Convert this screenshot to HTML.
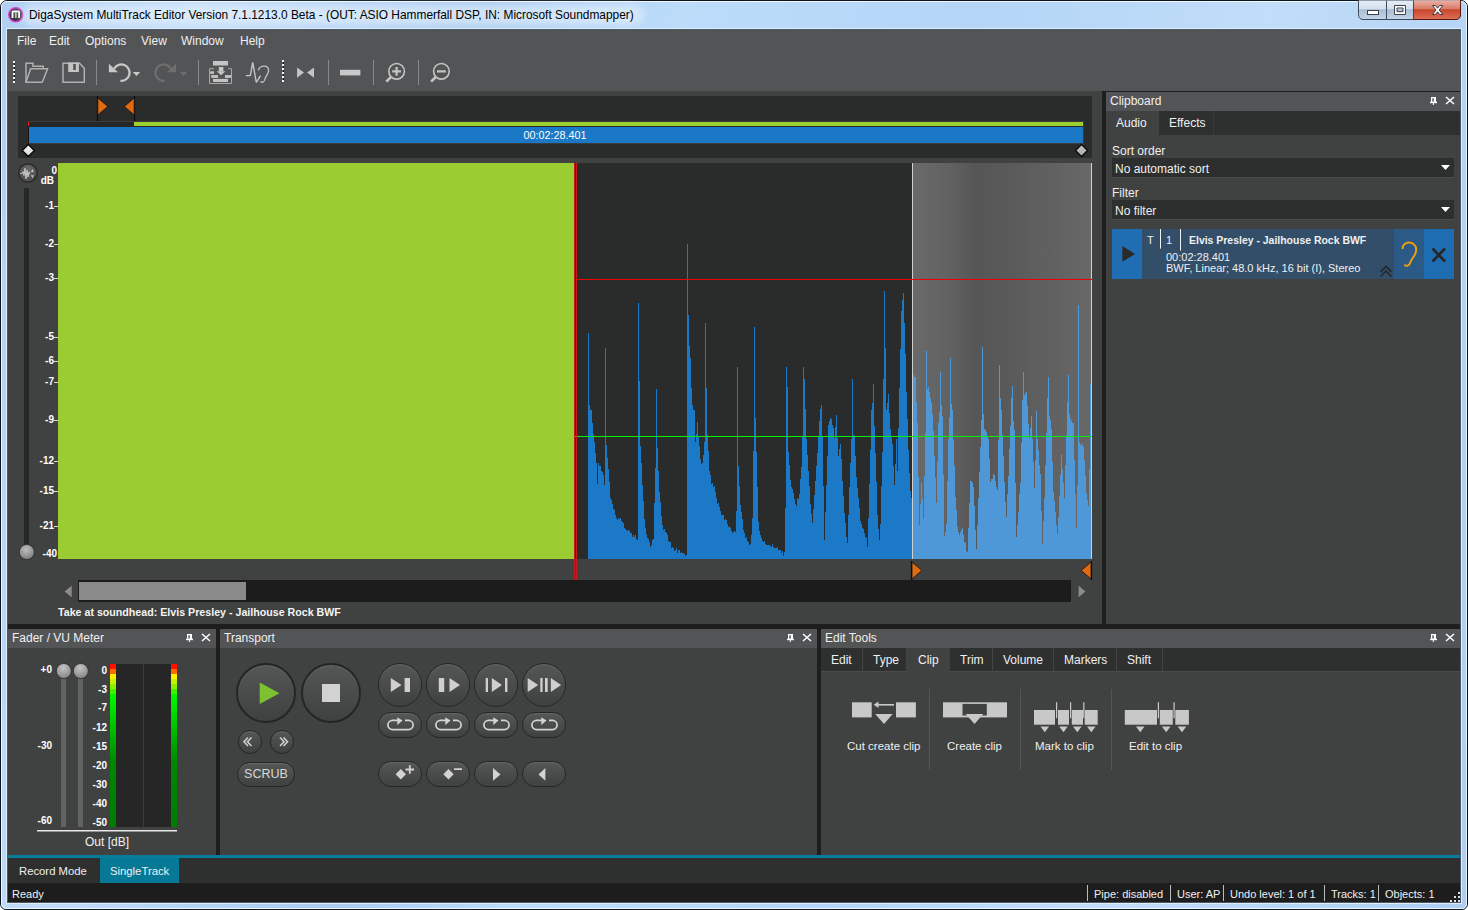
<!DOCTYPE html>
<html><head><meta charset="utf-8">
<style>
*{box-sizing:border-box;margin:0;padding:0}
html,body{width:1468px;height:910px;overflow:hidden}
body{position:relative;background:#fff;font-family:"Liberation Sans",sans-serif;font-size:12px;color:#f0f0f0}
.a{position:absolute}
.t{position:absolute;white-space:nowrap;line-height:14px}
/* frame */
#frame{left:0;top:0;width:1468px;height:910px;border:1px solid #0c141e;border-radius:7px 7px 6px 6px;
 background:linear-gradient(100deg,#b0cff2 0%,#c0dcf8 12%,#aacbf0 30%,#bcdcfa 42%,#b4d5f7 60%,#c0ddf9 78%,#aecdf1 100%)}
#frame2{left:1px;top:1px;width:1466px;height:908px;border:1px solid rgba(245,250,255,.9);border-radius:6px 6px 5px 5px}
#app{left:7px;top:29px;width:1454px;height:874px;background:#404141}
.bar{background:#535455}
.dk{background:#2a2b2b}
.sep{background:#1e1e1e}
.tabdk{background:#2e2f2f}
.menu span{position:absolute;top:34px;line-height:14px}
.btn{position:absolute;border-radius:50%;border:1.5px solid #242525;background:linear-gradient(#555656,#3f4040);box-shadow:0 1px 1px rgba(255,255,255,.10) inset}
.pill{position:absolute;border-radius:14px;border:1.5px solid #242525;background:linear-gradient(#555656,#3f4040);box-shadow:0 1px 1px rgba(255,255,255,.10) inset}
.ic{fill:#c8c8c8}
</style></head><body>
<div id="frame" class="a"></div>
<div id="frame2" class="a"></div>
<!-- title icon -->
<svg class="a" style="left:0;top:0" width="32" height="30" viewBox="0 0 32 30">
 <defs><radialGradient id="appg" cx=".5" cy=".35" r=".6"><stop offset="0" stop-color="#5a5a5a"/><stop offset="1" stop-color="#2e2e2e"/></radialGradient></defs>
 <circle cx="15.8" cy="14.85" r="7" fill="url(#appg)" stroke="#d23cd2" stroke-width="1.5"/>
 <path d="M12.5 18V12.2Q12.5 11.4 13.3 11.4H18.3Q19.1 11.4 19.1 12.2V18" fill="none" stroke="#fff" stroke-width="1.8"/>
 <path d="M15.8 12V18" stroke="#b8b8b8" stroke-width="1.8"/>
</svg>
<div class="a" style="left:22px;top:5px;width:622px;height:20px;background:rgba(240,247,255,.55);filter:blur(4px);border-radius:10px"></div>
<div class="t" style="left:29px;top:8px;color:#000;font-size:11.9px;line-height:15px">DigaSystem MultiTrack Editor Version 7.1.1213.0 Beta - (OUT: ASIO Hammerfall DSP, IN: Microsoft Soundmapper)</div>
<!-- window buttons -->
<svg class="a" style="left:1356px;top:0" width="108" height="22" viewBox="1356 0 108 22">
 <defs>
  <linearGradient id="wb" x1="0" y1="0" x2="0" y2="1"><stop offset="0" stop-color="#e6eef8"/><stop offset=".45" stop-color="#d3e0ee"/><stop offset=".5" stop-color="#a9bdd4"/><stop offset="1" stop-color="#c3d5e8"/></linearGradient>
  <linearGradient id="wc" x1="0" y1="0" x2="0" y2="1"><stop offset="0" stop-color="#eab0a4"/><stop offset=".45" stop-color="#d97a66"/><stop offset=".5" stop-color="#c8452c"/><stop offset="1" stop-color="#dd6f55"/></linearGradient>
 </defs>
 <path d="M1358.5 0V14.5A4.5 4.5 0 0 0 1363 19.5H1456A4.5 4.5 0 0 0 1460.5 15V0Z" fill="url(#wb)" stroke="#3e4a58" stroke-width="1"/>
 <path d="M1413.5 0.5H1460V15A4 4 0 0 1 1456 19H1413.5Z" fill="url(#wc)"/>
 <path d="M1460.5 0V15A4.5 4.5 0 0 1 1456 19.5H1413" fill="none" stroke="#5a1a10" stroke-width="1"/>
 <path d="M1386.5 0.5V19.5M1413.5 0.5V19.5" stroke="#3e4a58" stroke-width="1"/>
 <rect x="1367.5" y="10.5" width="11" height="4" fill="#fff" stroke="#3b3f48" stroke-width="1"/>
 <path d="M1394.5 5.5H1405.5V14.5H1394.5Z M1397 8H1403V11.7H1397Z" fill="#fff" fill-rule="evenodd" stroke="#3b3f48" stroke-width="1"/>
 <path d="M1432.5 5.5L1435.5 5.5L1437.6 8.2L1439.7 5.5H1442.7L1439.2 10L1442.7 14.5H1439.7L1437.6 11.8L1435.5 14.5H1432.5L1436 10Z" fill="#fff" stroke="#3b3f48" stroke-width="1" stroke-linejoin="round"/>
</svg>
<div id="app" class="a"></div>
<!-- menu + toolbar band -->
<div class="a bar" style="left:7px;top:29px;width:1454px;height:62px"></div>
<div class="menu">
 <span style="left:17px">File</span><span style="left:49px">Edit</span><span style="left:85px">Options</span>
 <span style="left:141px">View</span><span style="left:181px">Window</span><span style="left:240px">Help</span>
</div>
<svg class="a" style="left:0;top:0" width="470" height="92" viewBox="0 0 470 92">
 <g stroke="#f4f4f4" stroke-width="2" stroke-dasharray="2 2"><path d="M14 61V83"/><path d="M283 60V82"/></g>
 <g stroke="#1a1a1a" stroke-width="1" stroke-dasharray="2 2" stroke-dashoffset="2"><path d="M14.5 61V83"/><path d="M283.5 60V82"/></g>
 <g fill="none" stroke="#b0b0b0" stroke-width="1.5" stroke-linejoin="miter">
  <path d="M26 82V63.3H33V66.2H43.2V68.3"/>
  <path d="M26 82.2L30.6 68.8H47.6L42.3 82.2Z"/>
  <path d="M63 63.2H79.5L84.3 68.2V82.2H63Z"/>
 </g>
 <path d="M68.2 62.5H78.9V72.1H68.2Z M73.2 64V69.9H75.8V64Z" fill="#c4c4c4" fill-rule="evenodd"/>
 <g stroke="#8a8a8a" stroke-width="1"><path d="M96.5 60V85M198.5 60V85M328.5 60V85M373.5 60V85M418.5 60V85"/></g>
 <!-- undo -->
 <path d="M114.2 68.6A8.2 8.2 0 1 1 120.4 80.8" fill="none" stroke="#c8c8c8" stroke-width="2.3"/>
 <path d="M108.9 63.8V72.3H118Z" fill="#c8c8c8"/>
 <path d="M132.8 72H140.2L136.5 76.1Z" fill="#c8c8c8"/>
 <!-- redo -->
 <path d="M170.8 68.6A8.2 8.2 0 1 0 164.6 80.8" fill="none" stroke="#6e6e6e" stroke-width="2.3"/>
 <path d="M176 63.8V72.3H167.1Z" fill="#6e6e6e"/>
 <path d="M180 72H187.3L183.6 76.1Z" fill="#6e6e6e"/>
 <!-- import -->
 <g fill="#c4c4c4">
  <rect x="213" y="61" width="15" height="4.5"/>
  <rect x="218.8" y="67" width="4.6" height="4.5"/>
  <path d="M216.7 71.3H225.5L221.1 75.3Z"/>
  <rect x="210.2" y="71.3" width="3.8" height="2.6"/>
  <rect x="211.2" y="75.1" width="6.9" height="2.8"/>
  <rect x="225" y="75.1" width="6" height="2.8"/>
  <rect x="213" y="78.9" width="15" height="3.1"/>
 </g>
 <path d="M214 68.7H209.5V83.5H231.5V68.7H228" fill="none" stroke="#a8a8a8" stroke-width="1"/>
 <!-- wave ear -->
 <path d="M246 75.6H250.3L252.7 62.5L256.3 82.3L260.6 75.6" fill="none" stroke="#c4c4c4" stroke-width="1.4" stroke-linejoin="bevel"/>
 <path d="M258.4 70.3C259.5 65.5 267.5 64.5 268.6 69.5C269.4 73 265.8 75.5 265 79C264.4 82.3 261.5 83 260.6 81.3" fill="none" stroke="#c4c4c4" stroke-width="1.3"/>
 <!-- ▶◀ -->
 <path d="M297.1 67.6V77.7L304 72.6Z M314 67.6V77.7L307.1 72.6Z" fill="#c4c4c4"/>
 <rect x="340" y="69.8" width="20.4" height="5.6" fill="#c8c8c8"/>
 <!-- zoom in/out -->
 <g fill="none" stroke="#c4c4c4" stroke-width="1.6">
  <circle cx="396.6" cy="71.3" r="7.8"/><circle cx="441.4" cy="71.3" r="7.8"/>
 </g>
 <g stroke="#c4c4c4" stroke-width="2.6" stroke-linecap="butt"><path d="M391 77L386.3 81.7M435.8 77L431.1 81.7"/></g>
 <g stroke="#c4c4c4" stroke-width="2.2"><path d="M392.2 71.3H401M396.6 66.9V75.7M437 71.3H445.8"/></g>
</svg>

<!-- main editor panel -->
<div class="a" style="left:7px;top:91px;width:1095px;height:533px;background:#404141"></div>
<div class="a sep" style="left:1102px;top:91px;width:4px;height:533px"></div>
<div class="a sep" style="left:1106px;top:91px;width:355px;height:1px"></div>
<div class="a dk" style="left:18px;top:96px;width:1074px;height:62px"></div>
<svg class="a" style="left:0;top:0" width="1100" height="630" viewBox="0 0 1100 630">
 <!-- top markers -->
 <path d="M97.5 96V121M134.5 96V121" stroke="#0d0d0d" stroke-width="1.2"/>
 <path d="M97.8 98L107.8 106.5L97.8 115Z M134.2 98L124.4 106.5L134.2 115Z" fill="#e06a10" stroke="#111" stroke-width="0.8"/>
 <!-- bar -->
 <rect x="28" y="121" width="1056" height="6" fill="#262727"/>
 <rect x="28" y="121" width="1056" height="1" fill="#3a3b3b"/>
 <rect x="134" y="122" width="949" height="4" fill="#9ccf30"/>
 <rect x="28" y="122" width="1" height="4" fill="#e02020"/>
 <rect x="29" y="127" width="1054" height="16" fill="#1b78c6"/>
 <rect x="28" y="126" width="1" height="19" fill="#141414"/>
 <rect x="1083" y="121" width="1" height="24" fill="#3a3b3b"/>
 <rect x="29" y="143" width="1054" height="1" fill="#3a3b3b"/>
 <!-- diamonds -->
 <defs><linearGradient id="dg" x1="0" y1="0" x2="1" y2="1"><stop offset="0" stop-color="#f8f8f8"/><stop offset=".45" stop-color="#d8d8d8"/><stop offset=".55" stop-color="#c4c4c4"/><stop offset="1" stop-color="#a8a8a8"/></linearGradient>
 <linearGradient id="sel" x1="0" y1="0" x2="1" y2="0"><stop offset="0" stop-color="#6a6a6a"/><stop offset=".2" stop-color="#626262"/><stop offset=".35" stop-color="#565656"/><stop offset=".55" stop-color="#5a5a5a"/><stop offset="1" stop-color="#686868"/></linearGradient>
 <radialGradient id="knob" cx=".45" cy=".35" r=".7"><stop offset="0" stop-color="#bdbdbd"/><stop offset="1" stop-color="#7a7a7a"/></radialGradient>
 <radialGradient id="wbtn" cx=".5" cy=".3" r=".75"><stop offset="0" stop-color="#6a6a6a"/><stop offset="1" stop-color="#474747"/></radialGradient>
 </defs>
 <path d="M28.3 144.5L34.3 150.5L28.3 156.5L22.3 150.5Z M1081.5 144.5L1087.5 150.5L1081.5 156.5L1075.5 150.5Z" fill="url(#dg)" stroke="#0a0a0a" stroke-width="1.3"/>
 <!-- wave area -->
 <rect x="58" y="163" width="1034" height="396" fill="#2a2b2b"/>
 <rect x="58" y="163" width="516" height="396" fill="#9bcd33"/>
 <rect x="912" y="163" width="180" height="396" fill="url(#sel)"/>
 <path d="M588 559V333H589V405H590V410H591V410H592V423H593V434H594V442H595V453H596V463H597V484H598V463H599V466H600V466H601V471H602V472H603V475H604V485H605V348H606V445H607V458H608V469H609V482H610V498H611V500H612V504H613V509H614V510H615V515H616V518H617V520H618V518H619V519H620V518H621V521H622V522H623V523H624V528H625V529H626V530H627V531H628V530H629V531H630V533H631V533H632V537H633V535H634V537H635V535H636V539H637V540H638V303H639V381H640V446H641V463H642V485H643V501H644V519H645V528H646V534H647V538H648V539H649V542H650V547H651V545H652V540H653V539H654V503H655V468H656V389H657V448H658V471H659V492H660V502H661V516H662V525H663V530H664V529H665V532H666V533H667V535H668V541H669V542H670V542H671V548H672V547H673V548H674V551H675V550H676V548H677V553H678V550H679V550H680V553H681V552H682V553H683V553H684V554H685V556H686V555H687V244H688V315H689V346H690V358H691V388H692V405H693V410H694V410H695V442H696V434H697V422H698V436H699V446H700V459H701V464H702V463H703V455H704V442H705V323H706V388H707V435H708V451H709V471H710V475H711V484H712V483H713V487H714V486H715V492H716V498H717V504H718V503H719V507H720V511H721V515H722V515H723V515H724V520H725V519H726V520H727V524H728V527H729V526H730V528H731V531H732V533H733V532H734V531H735V532H736V511H737V367H738V466H739V486H740V505H741V512H742V519H743V530H744V533H745V538H746V537H747V541H748V542H749V545H750V544H751V535H752V518H753V451H754V327H755V418H756V452H757V487H758V522H759V531H760V535H761V538H762V541H763V542H764V541H765V544H766V545H767V545H768V545H769V545H770V546H771V547H772V544H773V547H774V548H775V548H776V548H777V547H778V550H779V550H780V550H781V553H782V551H783V556H784V552H785V508H786V367H787V387H788V452H789V465H790V480H791V487H792V489H793V493H794V499H795V504H796V506H797V498H798V499H799V494H800V479H801V467H802V436H803V367H804V379H805V409H806V439H807V455H808V471H809V486H810V504H811V514H812V523H813V509H814V495H815V481H816V466H817V453H818V436H819V421H820V409H821V405H822V436H823V486H824V540H825V512H826V485H827V456H828V425H829V421H830V418H831V419H832V425H833V428H834V438H835V427H836V415H837V438H838V456H839V449H840V444H841V459H842V481H843V496H844V513H845V523H846V537H847V543H848V515H849V487H850V463H851V439H852V379H853V435H854V437H855V456H856V477H857V488H858V498H859V508H860V521H861V524H862V528H863V529H864V533H865V537H866V538H867V547H868V518H869V484H870V450H871V410H872V403H873V384H874V426H875V453H876V482H877V515H878V529H879V540H880V524H881V486H882V452H883V379H884V291H885V348H886V410H887V403H888V394H889V413H890V429H891V438H892V444H893V466H894V485H895V464H896V439H897V471H898V428H899V388H900V349H901V311H902V300H903V293H904V323H905V354H906V392H907V419H908V450H909V473H910V491H911V498H912V559Z" fill="#1b79c8"/>
 <path d="M912 559V373H913V375H914V377H915V377H916V402H917V423H918V477H919V525H920V504H921V483H922V499H923V519H924V476H925V433H926V351H927V389H928V387H929V392H930V398H931V403H932V414H933V431H934V456H935V478H936V503H937V462H938V423H939V412H940V372H941V405H942V416H943V475H944V536H945V532H946V524H947V481H948V439H949V417H950V358H951V404H952V410H953V440H954V466H955V497H956V510H957V527H958V532H959V535H960V532H961V530H962V528H963V535H964V542H965V543H966V551H967V552H968V528H969V503H970V481H971V481H972V483H973V487H974V506H975V530H976V549H977V525H978V498H979V472H980V447H981V420H982V347H983V414H984V429H985V430H986V432H987V436H988V439H989V459H990V482H991V479H992V479H993V474H994V475H995V481H996V487H997V490H998V440H999V365H1000V398H1001V410H1002V435H1003V456H1004V482H1005V502H1006V517H1007V494H1008V476H1009V449H1010V426H1011V398H1012V386H1013V421H1014V430H1015V483H1016V537H1017V525H1018V512H1019V494H1020V483H1021V443H1022V400H1023V372H1024V395H1025V393H1026V392H1027V406H1028V424H1029V438H1030V428H1031V416H1032V439H1033V462H1034V488H1035V460H1036V411H1037V439H1038V450H1039V465H1040V474H1041V511H1042V544H1043V521H1044V498H1045V465H1046V433H1047V398H1048V377H1049V416H1050V420H1051V429H1052V462H1053V492H1054V501H1055V512H1056V525H1057V534H1058V517H1059V496H1060V475H1061V455H1062V469H1063V483H1064V498H1065V465H1066V435H1067V402H1068V375H1069V414H1070V419H1071V421H1072V423H1073V423H1074V460H1075V494H1076V528H1077V485H1078V305H1079V442H1080V445H1081V443H1082V445H1083V447H1084V460H1085V476H1086V493H1087V500H1088V506H1089V469H1090V384H1091V384H1092V559Z" fill="#4f98d8"/>
 <rect x="574" y="163" width="1" height="417" fill="#c81c1c"/>
 <rect x="576" y="163" width="1" height="417" fill="#c81c1c"/>
 <rect x="912" y="163" width="1" height="396" fill="#d0d0d0"/>
 <rect x="1091" y="163" width="1" height="396" fill="#b8d8f0"/>
 <rect x="577" y="279" width="515" height="1" fill="#f00000"/>
 <rect x="577" y="436" width="515" height="1" fill="#00f000"/>
 <rect x="575" y="436" width="1" height="1" fill="#00f000"/>
 <!-- bottom markers -->
 <path d="M911.5 561V580 M1091.5 561V580" stroke="#0d0d0d" stroke-width="1.2"/>
 <path d="M912 562L921.8 570.5L912 579Z M1091 562L1081.2 570.5L1091 579Z" fill="#e06a10" stroke="#111" stroke-width="0.8"/>
 <!-- left controls -->
 <circle cx="27.9" cy="173" r="9.2" fill="url(#wbtn)" stroke="#262626" stroke-width="1.2"/>
 <path d="M20.3 173.5H22L23 171.5L24 175.5L25 168.2L26 178.8L27 170.2L28 177L29 171.8L30 174.2" fill="none" stroke="#c8c8c8" stroke-width="1" stroke-linejoin="round"/>
 <path d="M30.9 172L32.4 169L33.9 172Z M30.9 175.2L32.4 178L33.9 175.2Z" fill="#c8c8c8"/>
 <rect x="24" y="188" width="5" height="366" fill="#262727"/>
 <circle cx="26.8" cy="552" r="7.6" fill="url(#knob)" stroke="#303030" stroke-width="1"/>
 <!-- scrollbar -->
 <rect x="78" y="580" width="993" height="22" fill="#1c1c1c"/>
 <rect x="79" y="582" width="167" height="18" fill="#8a8a8a"/>
 <path d="M64.6 591.5L71.7 585.8V597.2Z M1085.4 591.5L1078.6 585.8V597.2Z" fill="#8c8c8c"/>
</svg>
<div class="t" style="left:518px;top:128px;width:74px;text-align:center;font-size:10.8px;color:#fff">00:02:28.401</div>
<div class="a" style="left:30px;top:160px;width:28px">
 <div class="t" style="right:1px;top:5px;font-size:10px;font-weight:bold;color:#fff;line-height:12px">0</div>
 <div class="t" style="right:4px;top:15px;font-size:10px;font-weight:bold;color:#fff;line-height:12px">dB</div>
</div>
<div class="t" style="left:21px;width:33px;text-align:right;top:200px;font-size:10px;font-weight:bold;color:#fff;line-height:12px">-1</div>
<div class="a" style="left:54px;top:206px;width:4px;height:1px;background:#ddd"></div>
<div class="t" style="left:21px;width:33px;text-align:right;top:238px;font-size:10px;font-weight:bold;color:#fff;line-height:12px">-2</div>
<div class="a" style="left:54px;top:244px;width:4px;height:1px;background:#ddd"></div>
<div class="t" style="left:21px;width:33px;text-align:right;top:272px;font-size:10px;font-weight:bold;color:#fff;line-height:12px">-3</div>
<div class="a" style="left:54px;top:278px;width:4px;height:1px;background:#ddd"></div>
<div class="t" style="left:21px;width:33px;text-align:right;top:331px;font-size:10px;font-weight:bold;color:#fff;line-height:12px">-5</div>
<div class="a" style="left:54px;top:337px;width:4px;height:1px;background:#ddd"></div>
<div class="t" style="left:21px;width:33px;text-align:right;top:355px;font-size:10px;font-weight:bold;color:#fff;line-height:12px">-6</div>
<div class="a" style="left:54px;top:361px;width:4px;height:1px;background:#ddd"></div>
<div class="t" style="left:21px;width:33px;text-align:right;top:376px;font-size:10px;font-weight:bold;color:#fff;line-height:12px">-7</div>
<div class="a" style="left:54px;top:382px;width:4px;height:1px;background:#ddd"></div>
<div class="t" style="left:21px;width:33px;text-align:right;top:414px;font-size:10px;font-weight:bold;color:#fff;line-height:12px">-9</div>
<div class="a" style="left:54px;top:420px;width:4px;height:1px;background:#ddd"></div>
<div class="t" style="left:21px;width:33px;text-align:right;top:455px;font-size:10px;font-weight:bold;color:#fff;line-height:12px">-12</div>
<div class="a" style="left:54px;top:461px;width:4px;height:1px;background:#ddd"></div>
<div class="t" style="left:21px;width:33px;text-align:right;top:485px;font-size:10px;font-weight:bold;color:#fff;line-height:12px">-15</div>
<div class="a" style="left:54px;top:491px;width:4px;height:1px;background:#ddd"></div>
<div class="t" style="left:21px;width:33px;text-align:right;top:520px;font-size:10px;font-weight:bold;color:#fff;line-height:12px">-21</div>
<div class="a" style="left:54px;top:526px;width:4px;height:1px;background:#ddd"></div>
<div class="t" style="left:20px;width:37px;text-align:right;top:548px;font-size:10px;font-weight:bold;color:#fff;line-height:12px">-40</div>

<div class="t" style="left:58px;top:605px;font-weight:bold;font-size:10.66px;color:#f4f4f4">Take at soundhead: Elvis Presley - Jailhouse Rock BWF</div>

<!-- clipboard panel -->
<div class="a" style="left:1106px;top:92px;width:355px;height:532px;background:#404141"></div>
<div class="a bar" style="left:1106px;top:92px;width:355px;height:19px"></div>
<div class="t" style="left:1110px;top:94px;color:#f0f0f0">Clipboard</div>
<svg class="a" style="left:1420px;top:92px" width="40" height="19" viewBox="1420 92 40 19">
 <rect x="1431.0" y="97" width="5" height="5.5" fill="#fff"/><rect x="1432.3" y="98.3" width="1.5" height="3.4" fill="#535455"/><rect x="1430.0" y="101.7" width="7" height="1.5" fill="#fff"/><rect x="1432.8" y="103.2" width="1.2" height="1.7" fill="#fff"/>
 <path d="M1446.0 97.0L1454.0 104.0M1454.0 97.0L1446.0 104.0" stroke="#fff" stroke-width="1.5"/>
</svg>
<div class="a tabdk" style="left:1106px;top:111px;width:355px;height:24px"></div>
<div class="a" style="left:1106px;top:111px;width:53px;height:25px;background:#404141"></div>
<div class="a" style="left:1213px;top:111px;width:1px;height:24px;background:#3a3b3b"></div>
<div class="t" style="left:1116px;top:116px">Audio</div>
<div class="t" style="left:1169px;top:116px">Effects</div>
<div class="t" style="left:1112px;top:144px">Sort order</div>
<div class="a" style="left:1112px;top:158px;width:342px;height:20px;background:#2d2e2e;border-bottom:1px solid #4a4b4b"></div>
<div class="t" style="left:1115px;top:162px">No automatic sort</div>
<svg class="a" style="left:1440px;top:164px" width="12" height="8"><path d="M1 1H10L5.5 6Z" fill="#fff"/></svg>
<div class="t" style="left:1112px;top:186px">Filter</div>
<div class="a" style="left:1112px;top:200px;width:342px;height:20px;background:#2d2e2e;border-bottom:1px solid #4a4b4b"></div>
<div class="t" style="left:1115px;top:204px">No filter</div>
<svg class="a" style="left:1440px;top:206px" width="12" height="8"><path d="M1 1H10L5.5 6Z" fill="#fff"/></svg>
<!-- item -->
<div class="a" style="left:1112px;top:229px;width:342px;height:50px;background:#324e68"></div>
<div class="a" style="left:1112px;top:229px;width:30px;height:50px;background:#1f6db2"></div>
<div class="a" style="left:1394px;top:229px;width:30px;height:50px;background:#2b5a86"></div>
<div class="a" style="left:1424px;top:229px;width:30px;height:50px;background:#1e6db3"></div>
<svg class="a" style="left:1112px;top:229px" width="342" height="50" viewBox="1112 229 342 50">
 <path d="M1122.3 246V261.8L1135 253.9Z" fill="#2a2a2a"/>
 <path d="M1160.5 229V248.6M1180.5 229V250.6" stroke="#f0f0f0" stroke-width="1"/>
 <path d="M1380.5 272L1386 266.5L1391.5 272M1380.5 276.5L1386 271L1391.5 276.5" fill="none" stroke="#222" stroke-width="1.4"/>
 <path d="M1402.5 249C1402.5 240 1416.5 240.5 1416.2 250C1416 256 1411.5 258 1410.5 262C1409.5 266 1406 267 1404.5 264.5" fill="none" stroke="#f5a00a" stroke-width="1.9"/>
 <path d="M1432.5 248.5L1445 261.5M1445 248.5L1432.5 261.5" stroke="#262626" stroke-width="2.6"/>
</svg>
<div class="t" style="left:1147px;top:233px;font-size:11px">T</div>
<div class="t" style="left:1166px;top:233px;font-size:11px">1</div>
<div class="t" style="left:1189px;top:234px;font-size:10.46px;font-weight:bold">Elvis Presley - Jailhouse Rock BWF</div>
<div class="t" style="left:1166px;top:250px;font-size:11px">00:02:28.401</div>
<div class="t" style="left:1166px;top:261px;font-size:11px">BWF, Linear; 48.0 kHz, 16 bit (I), Stereo</div>

<!-- bottom -->
<div class="a sep" style="left:7px;top:624px;width:1454px;height:5px"></div>
<!-- panels -->
<div class="a" style="left:8px;top:629px;width:208px;height:226px;background:#404141"></div>
<div class="a sep" style="left:216px;top:629px;width:4px;height:226px"></div>
<div class="a" style="left:220px;top:629px;width:597px;height:226px;background:#404141"></div>
<div class="a sep" style="left:817px;top:629px;width:4px;height:226px"></div>
<div class="a" style="left:821px;top:629px;width:640px;height:226px;background:#404141"></div>
<div class="a bar" style="left:8px;top:629px;width:208px;height:19px"></div>
<div class="a bar" style="left:220px;top:629px;width:597px;height:19px"></div>
<div class="a bar" style="left:821px;top:629px;width:640px;height:19px"></div>
<div class="t" style="left:12px;top:631px">Fader / VU Meter</div>
<div class="t" style="left:224px;top:631px">Transport</div>
<div class="t" style="left:825px;top:631px">Edit Tools</div>
<svg class="a" style="left:0;top:629px" width="1468" height="19" viewBox="0 629 1468 19">
 <rect x="187.0" y="634" width="5" height="5.5" fill="#fff"/><rect x="188.3" y="635.3" width="1.5" height="3.4" fill="#535455"/><rect x="186.0" y="638.7" width="7" height="1.5" fill="#fff"/><rect x="188.8" y="640.2" width="1.2" height="1.7" fill="#fff"/>
 <path d="M202.0 634.0L210.0 641.0M210.0 634.0L202.0 641.0" stroke="#fff" stroke-width="1.5"/>
 <rect x="788.0" y="634" width="5" height="5.5" fill="#fff"/><rect x="789.3" y="635.3" width="1.5" height="3.4" fill="#535455"/><rect x="787.0" y="638.7" width="7" height="1.5" fill="#fff"/><rect x="789.8" y="640.2" width="1.2" height="1.7" fill="#fff"/>
 <path d="M803.0 634.0L811.0 641.0M811.0 634.0L803.0 641.0" stroke="#fff" stroke-width="1.5"/>
 <rect x="1431.0" y="634" width="5" height="5.5" fill="#fff"/><rect x="1432.3" y="635.3" width="1.5" height="3.4" fill="#535455"/><rect x="1430.0" y="638.7" width="7" height="1.5" fill="#fff"/><rect x="1432.8" y="640.2" width="1.2" height="1.7" fill="#fff"/>
 <path d="M1446.0 634.0L1454.0 641.0M1454.0 634.0L1446.0 641.0" stroke="#fff" stroke-width="1.5"/>
</svg>
<svg class="a" style="left:0;top:648px" width="216" height="207" viewBox="0 648 216 207">
 <defs>
  <radialGradient id="fk" cx=".45" cy=".3" r=".75"><stop offset="0" stop-color="#c4c4c4"/><stop offset="1" stop-color="#808080"/></radialGradient>
  <linearGradient id="vu" x1="0" y1="664" x2="0" y2="827" gradientUnits="userSpaceOnUse">
   <stop offset="0" stop-color="#ff1000"/><stop offset=".03" stop-color="#ff1000"/>
   <stop offset=".031" stop-color="#ff6a00"/><stop offset=".061" stop-color="#ff6a00"/>
   <stop offset=".062" stop-color="#fff000"/><stop offset=".092" stop-color="#fff000"/>
   <stop offset=".093" stop-color="#c8f000"/><stop offset=".122" stop-color="#c8f000"/>
   <stop offset=".123" stop-color="#88f000"/><stop offset=".153" stop-color="#88f000"/>
   <stop offset=".154" stop-color="#40f000"/><stop offset=".184" stop-color="#40f000"/>
   <stop offset=".185" stop-color="#00f800"/><stop offset=".28" stop-color="#00e000"/>
   <stop offset=".45" stop-color="#00b000"/><stop offset=".6" stop-color="#008800"/><stop offset="1" stop-color="#007c00"/>
  </linearGradient>
 </defs>
 <rect x="61" y="677" width="5" height="150" fill="#626262"/>
 <rect x="78" y="677" width="5" height="150" fill="#626262"/>
 <circle cx="63.8" cy="671" r="7.6" fill="url(#fk)" stroke="#333" stroke-width="1"/>
 <circle cx="80.8" cy="671" r="7.6" fill="url(#fk)" stroke="#333" stroke-width="1"/>
 <rect x="110" y="664" width="67" height="163" fill="#262626"/>
 <rect x="143" y="664" width="1" height="163" fill="#3c3c3c"/>
 <rect x="110" y="664" width="6" height="163" fill="url(#vu)"/>
 <rect x="171" y="664" width="6" height="163" fill="url(#vu)"/>
 <rect x="37" y="830" width="140" height="1.5" fill="#e8e8e8"/>
</svg>
<div class="a" style="left:0;top:0">
 <div class="t" style="left:30px;width:22px;text-align:right;top:663px;font-size:10px;font-weight:bold;color:#fff">+0</div>
 <div class="t" style="left:30px;width:22px;text-align:right;top:738.5px;font-size:10px;font-weight:bold;color:#fff">-30</div>
 <div class="t" style="left:30px;width:22px;text-align:right;top:813.5px;font-size:10px;font-weight:bold;color:#fff">-60</div>
 <div class="t" style="left:80px;width:27px;text-align:right;top:664px;font-size:10px;font-weight:bold;color:#fff">0</div>
 <div class="t" style="left:80px;width:27px;text-align:right;top:683px;font-size:10px;font-weight:bold;color:#fff">-3</div>
 <div class="t" style="left:80px;width:27px;text-align:right;top:701px;font-size:10px;font-weight:bold;color:#fff">-7</div>
 <div class="t" style="left:80px;width:27px;text-align:right;top:721px;font-size:10px;font-weight:bold;color:#fff">-12</div>
 <div class="t" style="left:80px;width:27px;text-align:right;top:740px;font-size:10px;font-weight:bold;color:#fff">-15</div>
 <div class="t" style="left:80px;width:27px;text-align:right;top:759px;font-size:10px;font-weight:bold;color:#fff">-20</div>
 <div class="t" style="left:80px;width:27px;text-align:right;top:778px;font-size:10px;font-weight:bold;color:#fff">-30</div>
 <div class="t" style="left:80px;width:27px;text-align:right;top:797px;font-size:10px;font-weight:bold;color:#fff">-40</div>
 <div class="t" style="left:80px;width:27px;text-align:right;top:816px;font-size:10px;font-weight:bold;color:#fff">-50</div>
 <div class="t" style="left:66px;width:82px;text-align:center;top:835px;color:#f0f0f0">Out [dB]</div>
</div>

<div class="btn" style="left:236px;top:663px;width:60px;height:60px;border-width:2px"></div>
<div class="btn" style="left:301px;top:663px;width:60px;height:60px;border-width:2px"></div>
<div class="btn" style="left:238px;top:730px;width:24px;height:24px"></div>
<div class="btn" style="left:270px;top:730px;width:24px;height:24px"></div>
<div class="pill" style="left:237px;top:762px;width:58px;height:25px"></div>
<div class="t" style="left:237px;top:767px;width:58px;text-align:center;font-size:12.5px;color:#d8d8d8;line-height:15px">SCRUB</div>
<div class="btn" style="left:378px;top:663px;width:44px;height:44px"></div>
<div class="btn" style="left:426px;top:663px;width:44px;height:44px"></div>
<div class="btn" style="left:474px;top:663px;width:44px;height:44px"></div>
<div class="btn" style="left:522px;top:663px;width:44px;height:44px"></div>
<div class="pill" style="left:378px;top:712px;width:44px;height:26px"></div>
<div class="pill" style="left:426px;top:712px;width:44px;height:26px"></div>
<div class="pill" style="left:474px;top:712px;width:44px;height:26px"></div>
<div class="pill" style="left:522px;top:712px;width:44px;height:26px"></div>
<div class="pill" style="left:378px;top:761px;width:44px;height:26px"></div>
<div class="pill" style="left:426px;top:761px;width:44px;height:26px"></div>
<div class="pill" style="left:474px;top:761px;width:44px;height:26px"></div>
<div class="pill" style="left:522px;top:761px;width:44px;height:26px"></div>
<svg class="a" style="left:220px;top:648px" width="597" height="207" viewBox="220 648 597 207">
 <path d="M259.7 682.6V704L279.5 693.3Z" fill="#7dc132"/>
 <rect x="322" y="684" width="18" height="18" fill="#d2d2d2"/>
 <g fill="none" stroke="#d0d0d0" stroke-width="1.6">
  <path d="M248 737.5L244 741.7L248 746M251.5 737.5L247.5 741.7L251.5 746"/>
  <path d="M280 737.5L284 741.7L280 746M283.5 737.5L287.5 741.7L283.5 746"/>
 </g>
 <g fill="#cfcfcf">
  <path d="M390.8 678V692L401.5 685Z"/><rect x="404.6" y="678" width="5.4" height="14"/>
  <rect x="438.8" y="678" width="5.4" height="14"/><path d="M449.5 678V692L460 685Z"/>
  <rect x="485.7" y="678" width="2.3" height="14"/><path d="M491.8 678V692L502 685Z"/><rect x="505" y="678" width="2.4" height="14"/>
  <path d="M527.7 678V692L538.2 685Z"/><rect x="540.3" y="678" width="2.3" height="14"/><rect x="545" y="678" width="2.7" height="14"/><path d="M550.8 678V692L561.2 685Z"/>
 </g>
 <g fill="none" stroke="#d2d2d2" stroke-width="1.7">
  <path d="M398 720.4H392.5A4.6 4.6 0 0 0 392.5 729.6H408.5A4.6 4.6 0 0 0 408.5 720.4H405"/>
  <path d="M446 720.4H440.5A4.6 4.6 0 0 0 440.5 729.6H456.5A4.6 4.6 0 0 0 456.5 720.4H453"/>
  <path d="M494 720.4H488.5A4.6 4.6 0 0 0 488.5 729.6H504.5A4.6 4.6 0 0 0 504.5 720.4H501"/>
  <path d="M542 720.4H536.5A4.6 4.6 0 0 0 536.5 729.6H552.5A4.6 4.6 0 0 0 552.5 720.4H549"/>
 </g>
 <g fill="#d2d2d2">
  <path d="M397.3 717.3L402.5 720.6L397.3 725Z"/>
  <path d="M445.3 717.3L450.5 720.6L445.3 725Z"/>
  <path d="M493.3 717.3L498.5 720.6L493.3 725Z"/>
  <path d="M541.3 717.3L546.5 720.6L541.3 725Z"/>
  <path d="M400.8 769L406 774.2L400.8 779.4L395.6 774.2Z"/>
  <path d="M448.5 769L453.7 774.2L448.5 779.4L443.3 774.2Z"/>
  <path d="M493 768V780.8L500.5 774.4Z"/><path d="M545.4 768V780.8L538.5 774.4Z"/>
 </g>
 <g stroke="#d2d2d2" stroke-width="1.8"><path d="M405.5 769.5H414M409.8 765.3V773.7M454 769.2H462"/></g>
</svg>

<div class="a tabdk" style="left:821px;top:648px;width:640px;height:24px;border-bottom:1px solid #4a4b4b"></div>
<div class="a" style="left:907px;top:648px;width:43px;height:25px;background:#404141"></div>
<svg class="a" style="left:821px;top:648px" width="640" height="24" viewBox="821 648 640 24">
 <path d="M862.5 648V672M906.5 648V672M992.5 648V672M1053.5 648V672M1116.5 648V672M1162.5 648V672" stroke="#444" stroke-width="1"/>
</svg>
<div class="t" style="left:831px;top:653px">Edit</div>
<div class="t" style="left:873px;top:653px">Type</div>
<div class="t" style="left:918px;top:653px">Clip</div>
<div class="t" style="left:960px;top:653px">Trim</div>
<div class="t" style="left:1003px;top:653px">Volume</div>
<div class="t" style="left:1064px;top:653px">Markers</div>
<div class="t" style="left:1127px;top:653px">Shift</div>
<svg class="a" style="left:821px;top:672px" width="640" height="183" viewBox="821 672 640 183">
 <path d="M929.5 689V770M1020.5 689V770M1111.5 689V770" stroke="#555" stroke-width="1"/>
 <g fill="#c8c8c8">
  <rect x="852" y="702.3" width="19.7" height="15.1"/><rect x="896" y="702.3" width="19.9" height="15.1"/>
  <path d="M873.6 704.7L878.5 701.5V708Z"/><rect x="877" y="704" width="17" height="1.6"/>
  <path d="M875.2 714H892.7L884 724.1Z"/>
  <rect x="943" y="702.3" width="64" height="15.1"/>
 </g>
 <rect x="962.5" y="703.9" width="24.3" height="11.6" fill="#404141"/>
 <path d="M965.7 714H983.3L974.5 724.1Z" fill="#c8c8c8"/>
 <g fill="#c8c8c8">
  <rect x="1034" y="710" width="21" height="14.7"/><rect x="1058" y="710" width="11" height="14.7"/>
  <rect x="1071.8" y="710" width="11.2" height="14.7"/><rect x="1084.7" y="710" width="13" height="14.7"/>
  <rect x="1056" y="702.2" width="1.2" height="16"/><rect x="1070" y="702.2" width="1.2" height="16"/><rect x="1083.2" y="702.2" width="1.2" height="16"/>
  <path d="M1040.5 726.6H1049.1L1044.8 732.3Z M1059.2 726.6H1067.8L1063.5 732.3Z M1073 726.6H1081.6L1077.3 732.3Z M1087 726.6H1095.6L1091.3 732.3Z"/>
  <rect x="1124.8" y="710" width="32.2" height="14.7"/><rect x="1159.8" y="710" width="13" height="14.7"/><rect x="1175.3" y="710" width="13.6" height="14.7"/>
  <rect x="1157.8" y="702.2" width="1.2" height="16"/><rect x="1173.5" y="702.2" width="1.2" height="16"/>
  <path d="M1135.9 726.6H1144.5L1140.2 732.3Z M1161.9 726.6H1170.5L1166.2 732.3Z M1177.7 726.6H1186.3L1182 732.3Z"/>
 </g>
</svg>
<div class="t" style="left:847px;top:739px;font-size:11.5px">Cut create clip</div>
<div class="t" style="left:947px;top:739px;font-size:11.5px">Create clip</div>
<div class="t" style="left:1035px;top:739px;font-size:11.5px">Mark to clip</div>
<div class="t" style="left:1129px;top:739px;font-size:11.5px">Edit to clip</div>

<!-- teal + tabs + status -->
<div class="a" style="left:7px;top:855px;width:1454px;height:3px;background:#087c99"></div>
<div class="a tabdk" style="left:7px;top:858px;width:1454px;height:25px"></div>
<div class="a" style="left:100px;top:858px;width:79px;height:25px;background:#067997"></div>
<div class="t" style="left:19px;top:864px;font-size:11.3px">Record Mode</div>
<div class="t" style="left:110px;top:864px;font-size:11.3px">SingleTrack</div>
<div class="a" style="left:7px;top:883px;width:1454px;height:19px;background:#1d1d1d"></div>
<div class="t" style="left:12px;top:887px;font-size:11px">Ready</div>
<svg class="a" style="left:1080px;top:883px" width="381" height="19" viewBox="1080 883 381 19">
 <path d="M1087.5 885V901M1170.5 885V901M1223.5 885V901M1324.5 885V901M1378.5 885V901" stroke="#bbb" stroke-width="1"/>
 <g fill="#ddd"><rect x="1458" y="892" width="2" height="2"/><rect x="1454" y="896" width="2" height="2"/><rect x="1458" y="896" width="2" height="2"/><rect x="1450" y="900" width="2" height="2"/><rect x="1454" y="900" width="2" height="2"/><rect x="1458" y="900" width="2" height="2"/></g>
</svg>
<div class="t" style="left:1094px;top:887px;font-size:11px">Pipe: disabled</div>
<div class="t" style="left:1177px;top:887px;font-size:11px">User: AP</div>
<div class="t" style="left:1230px;top:887px;font-size:11px">Undo level: 1 of 1</div>
<div class="t" style="left:1331px;top:887px;font-size:11px">Tracks: 1</div>
<div class="t" style="left:1385px;top:887px;font-size:11px">Objects: 1</div>

<div class="a" style="left:6px;top:28px;width:1456px;height:876px;border:1px solid #e0eefc"></div>
<div class="a" style="left:7px;top:29px;width:1454px;height:874px;border:1px solid #4b5868"></div>
</body></html>
